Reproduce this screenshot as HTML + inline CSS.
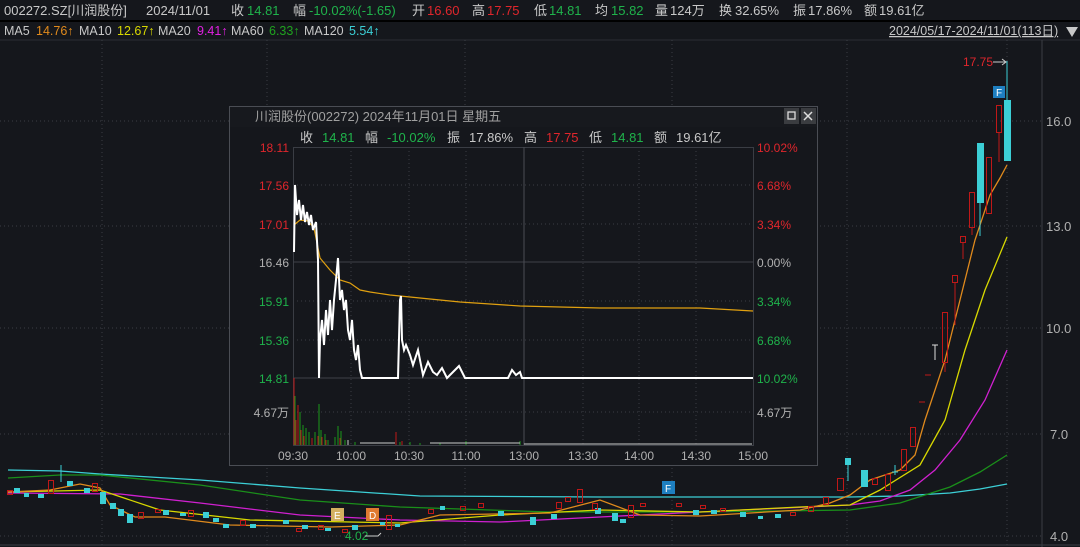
<!DOCTYPE html>
<html><head><meta charset="utf-8"><style>
html,body{margin:0;padding:0;background:#15171c;width:1080px;height:547px;overflow:hidden}
svg{display:block}
text{font-family:"Liberation Sans","Noto Sans CJK SC",sans-serif}
</style></head><body>
<svg width="1080" height="547" viewBox="0 0 1080 547" xmlns="http://www.w3.org/2000/svg">
<rect width="1080" height="547" fill="#15171c"/>
<!-- header -->
<g font-size="13">
<text x="4" y="15" fill="#c8c8c8">002272.SZ[川润股份]</text>
<text x="146" y="15" fill="#c8c8c8">2024/11/01</text>
<text x="231" y="15" fill="#c8c8c8">收</text><text x="247" y="15" fill="#1fb34b">14.81</text>
<text x="293" y="15" fill="#c8c8c8">幅</text><text x="309" y="15" fill="#1fb34b">-10.02%(-1.65)</text>
<text x="412" y="15" fill="#c8c8c8">开</text><text x="427" y="15" fill="#e0262c">16.60</text>
<text x="472" y="15" fill="#c8c8c8">高</text><text x="487" y="15" fill="#e0262c">17.75</text>
<text x="534" y="15" fill="#c8c8c8">低</text><text x="549" y="15" fill="#1fb34b">14.81</text>
<text x="595" y="15" fill="#c8c8c8">均</text><text x="611" y="15" fill="#1fb34b">15.82</text>
<text x="655" y="15" fill="#c8c8c8">量</text><text x="670" y="15" fill="#c8c8c8">124万</text>
<text x="719" y="15" fill="#c8c8c8">换</text><text x="735" y="15" fill="#c8c8c8">32.65%</text>
<text x="793" y="15" fill="#c8c8c8">振</text><text x="808" y="15" fill="#c8c8c8">17.86%</text>
<text x="864" y="15" fill="#c8c8c8">额</text><text x="879" y="15" fill="#c8c8c8">19.61亿</text>
</g>
<line x1="0" y1="21" x2="1080" y2="21" stroke="#000" stroke-width="2"/>
<g font-size="12.5">
<text x="4" y="35" fill="#c8c8c8">MA5</text><text x="36" y="35" fill="#e08a1c">14.76↑</text>
<text x="79" y="35" fill="#c8c8c8">MA10</text><text x="117" y="35" fill="#d8d800">12.67↑</text>
<text x="158" y="35" fill="#c8c8c8">MA20</text><text x="197" y="35" fill="#e020e0">9.41↑</text>
<text x="231" y="35" fill="#c8c8c8">MA60</text><text x="269" y="35" fill="#1fa31f">6.33↑</text>
<text x="304" y="35" fill="#c8c8c8">MA120</text><text x="349" y="35" fill="#3ccfd6">5.54↑</text>
<text x="889" y="35" fill="#c8c8c8" text-decoration="underline">2024/05/17-2024/11/01(113日)</text>
</g>
<path d="M1066 27 L1078 27 L1072 37 Z" fill="#c8c8c8"/>
<line x1="0" y1="40" x2="1080" y2="40" stroke="#2a2d33"/>
<!-- right axis -->
<line x1="1042" y1="40" x2="1042" y2="547" stroke="#3a3d44"/>
<g stroke="#3a3d44" stroke-dasharray="1,3">
<line x1="0" y1="121" x2="1042" y2="121"/><line x1="0" y1="226" x2="1042" y2="226"/>
<line x1="0" y1="328" x2="1042" y2="328"/><line x1="0" y1="434" x2="1042" y2="434"/>
<line x1="0" y1="536" x2="1042" y2="536"/>
<line x1="102" y1="40" x2="102" y2="547"/><line x1="267" y1="40" x2="267" y2="547"/>
<line x1="465" y1="40" x2="465" y2="547"/><line x1="672" y1="40" x2="672" y2="547"/>
<line x1="847" y1="40" x2="847" y2="547"/><line x1="1007" y1="40" x2="1007" y2="547"/>
</g>
<g font-size="13" fill="#b0b0b0">
<text x="1046" y="126">16.0</text><text x="1046" y="231">13.0</text><text x="1046" y="333">10.0</text>
<text x="1050" y="439">7.0</text><text x="1050" y="541">4.0</text>
</g>
<line x1="0" y1="545" x2="1080" y2="545" stroke="#3a3d44"/>
<!-- MA lines -->
<g fill="none" stroke-width="1.3">
<polyline stroke="#3ccfd6" points="8,470 60,471 100,474 200,480 300,488 420,496 600,497 850,497 900,496 950,493 980,489 1007,484"/>
<polyline stroke="#1a8f1a" points="8,478 60,475 100,475 200,485 300,500 400,507 550,512 700,512 850,510 900,503 950,487 980,472 1007,455"/>
<polyline stroke="#d020d0" points="8,493 120,494 200,503 300,515 400,520 500,522 600,517 700,512 850,505 880,501 910,490 935,470 960,440 985,400 1007,350"/>
<polyline stroke="#d8d800" points="8,492 100,490 160,510 250,520 400,523 500,515 600,510 700,512 800,507 850,505 880,490 920,465 945,420 965,350 985,290 1007,237"/>
<polyline stroke="#e08a1c" points="8,492 50,490 80,484 100,488 110,505 135,517 165,517 230,525 330,527 400,525 440,515 550,513 600,500 640,515 700,516 800,510 830,503 850,495 870,480 900,470 915,455 925,420 945,360 960,300 975,240 990,195 1000,178 1007,165"/>
</g>
<!-- candles -->
<g stroke-width="1">
<line x1="1007" y1="61" x2="1007" y2="100" stroke="#3ccfd6"/>
<rect x="1004" y="100" width="7" height="61" fill="#3ccfd6"/>
<rect x="996.5" y="105.5" width="5" height="27" fill="none" stroke="#c01818"/><line x1="999" y1="132" x2="999" y2="162" stroke="#c01818"/>
<rect x="986.5" y="157.5" width="5" height="56" fill="none" stroke="#c01818"/>
<rect x="977" y="143" width="7" height="60" fill="#3ccfd6"/><line x1="980" y1="203" x2="980" y2="236" stroke="#3ccfd6"/>
<rect x="969.5" y="192.5" width="5" height="35" fill="none" stroke="#c01818"/><line x1="972" y1="228" x2="972" y2="235" stroke="#c01818"/>
<rect x="960.5" y="236.5" width="5" height="6" fill="none" stroke="#c01818"/><line x1="963" y1="243" x2="963" y2="259" stroke="#c01818"/>
<rect x="952.5" y="275.5" width="5" height="7" fill="none" stroke="#c01818"/><line x1="955" y1="283" x2="955" y2="325" stroke="#c01818"/>
<rect x="942.5" y="312.5" width="5" height="50" fill="none" stroke="#c01818"/><line x1="945" y1="362" x2="945" y2="372" stroke="#c01818"/>
<path d="M932 345 H938 M935 345 V360" stroke="#ddd"/>
<line x1="925" y1="375" x2="931" y2="375" stroke="#c01818"/><line x1="919" y1="402" x2="925" y2="402" stroke="#c01818"/>
<rect x="910.5" y="427.5" width="5" height="19" fill="none" stroke="#c01818"/>
<rect x="901.5" y="449.5" width="5" height="21" fill="none" stroke="#c01818"/>
<path d="M892 472 H898 M895 465 V475" stroke="#3ccfd6"/>
<rect x="885.5" y="474.5" width="5" height="16" fill="none" stroke="#c01818"/>
<rect x="872.5" y="478.5" width="5" height="6" fill="none" stroke="#c01818"/>
<rect x="861" y="470" width="7" height="17" fill="#3ccfd6"/>
<rect x="845" y="458" width="6" height="7" fill="#3ccfd6"/><line x1="848" y1="465" x2="848" y2="481" stroke="#3ccfd6"/>
<rect x="837.5" y="478.5" width="6" height="12" fill="none" stroke="#c01818"/>
</g>
<g>
<g fill="#3ccfd6">
<rect x="14" y="488" width="6" height="5"/><rect x="24" y="493" width="5" height="4"/><rect x="38" y="494" width="6" height="4"/>
<rect x="67" y="481" width="6" height="5"/><rect x="84" y="488" width="6" height="5"/><rect x="100" y="492" width="6" height="12"/>
<rect x="110" y="503" width="6" height="6"/><rect x="118" y="509" width="6" height="7"/><rect x="127" y="514" width="6" height="9"/>
<rect x="163" y="510" width="6" height="5"/><rect x="180" y="513" width="6" height="3"/><rect x="203" y="512" width="6" height="6"/>
<rect x="213" y="518" width="6" height="4"/><rect x="223" y="524" width="6" height="4"/><rect x="250" y="524" width="6" height="4"/>
<rect x="283" y="520" width="6" height="4"/><rect x="302" y="525" width="6" height="4"/><rect x="325" y="528" width="6" height="3"/>
<rect x="352" y="525" width="6" height="5"/><rect x="380" y="522" width="5" height="3"/><rect x="395" y="524" width="5" height="3"/>
<rect x="440" y="506" width="5" height="4"/><rect x="498" y="511" width="6" height="5"/><rect x="530" y="517" width="6" height="8"/>
<rect x="551" y="514" width="6" height="5"/><rect x="595" y="508" width="6" height="6"/><rect x="612" y="513" width="6" height="8"/>
<rect x="620" y="519" width="6" height="4"/><rect x="693" y="510" width="6" height="5"/><rect x="711" y="510" width="6" height="4"/>
<rect x="740" y="512" width="6" height="5"/><rect x="758" y="516" width="5" height="3"/><rect x="775" y="514" width="6" height="4"/>
</g>
<g fill="none" stroke="#c01818">
<rect x="7.5" y="490.5" width="5" height="4"/><rect x="48.5" y="480.5" width="5" height="13"/><rect x="92.5" y="483.5" width="5" height="8"/>
<rect x="138.5" y="512.5" width="5" height="6"/><rect x="155.5" y="509.5" width="5" height="3"/><rect x="188.5" y="510.5" width="5" height="6"/>
<rect x="240.5" y="520.5" width="5" height="5"/><rect x="296.5" y="528.5" width="5" height="3"/><rect x="318.5" y="525.5" width="5" height="4"/>
<rect x="342.5" y="529.5" width="5" height="3"/><rect x="386.5" y="515.5" width="5" height="14"/><rect x="428.5" y="509.5" width="5" height="4"/>
<rect x="460.5" y="506.5" width="5" height="4"/><rect x="478.5" y="503.5" width="5" height="4"/><rect x="556.5" y="502.5" width="5" height="6"/>
<rect x="565.5" y="497.5" width="5" height="4"/><rect x="577.5" y="489.5" width="5" height="13"/><rect x="592.5" y="503.5" width="5" height="6"/>
<rect x="628.5" y="505.5" width="5" height="12"/><rect x="640.5" y="503.5" width="5" height="3"/><rect x="676.5" y="503.5" width="5" height="3"/>
<rect x="700.5" y="505.5" width="5" height="3"/><rect x="720.5" y="508.5" width="5" height="3"/><rect x="790.5" y="512.5" width="5" height="3"/>
<rect x="808.5" y="506.5" width="5" height="5"/><rect x="823.5" y="497.5" width="5" height="7"/>
</g>
<line x1="61" y1="465" x2="61" y2="482" stroke="#3ccfd6"/>
</g>
<!-- markers -->
<rect x="993" y="86" width="12" height="12" fill="#1e7fc0"/><text x="996" y="96" font-size="10" fill="#fff">F</text>
<rect x="662" y="481" width="13" height="13" fill="#1e7fc0"/><text x="665" y="492" font-size="10" fill="#fff">F</text>
<rect x="331" y="508" width="13" height="13" fill="#d4b060"/><text x="334" y="519" font-size="10" fill="#fff">E</text>
<rect x="366" y="508" width="13" height="13" fill="#e07a30"/><text x="369" y="519" font-size="10" fill="#fff">D</text>
<text x="963" y="66" font-size="12" fill="#e0262c">17.75</text>
<path d="M993 62 H1006 M1002 59 L1006 62 L1002 65" stroke="#ccc" fill="none"/>
<text x="345" y="540" font-size="12" fill="#1fb34b">4.02</text>
<path d="M365 536 H378 L381 533" stroke="#ccc" fill="none"/>
<!-- popup -->
<rect x="229.5" y="106.5" width="588" height="359" fill="#15171c" stroke="#4a4d54"/>
<rect x="230" y="107" width="587" height="20" fill="#17191e"/>
<text x="255" y="121" font-size="13" fill="#a0a0a0">川润股份(002272) 2024年11月01日 星期五</text>
<rect x="784" y="108" width="15" height="16" fill="#3a3c40"/><rect x="788" y="112" width="7" height="7" fill="none" stroke="#ddd" stroke-width="1.3"/>
<rect x="801" y="108" width="15" height="16" fill="#3a3c40"/><path d="M804 112 L812 120 M812 112 L804 120" stroke="#ddd" stroke-width="1.5"/>
<g font-size="13">
<text x="300" y="142" fill="#c8c8c8">收</text><text x="322" y="142" fill="#1fb34b">14.81</text>
<text x="365" y="142" fill="#c8c8c8">幅</text><text x="387" y="142" fill="#1fb34b">-10.02%</text>
<text x="447" y="142" fill="#c8c8c8">振</text><text x="469" y="142" fill="#c8c8c8">17.86%</text>
<text x="524" y="142" fill="#c8c8c8">高</text><text x="546" y="142" fill="#e0262c">17.75</text>
<text x="589" y="142" fill="#c8c8c8">低</text><text x="611" y="142" fill="#1fb34b">14.81</text>
<text x="654" y="142" fill="#c8c8c8">额</text><text x="676" y="142" fill="#c8c8c8">19.61亿</text>
</g>
<rect x="293.5" y="147.5" width="460" height="298" fill="none" stroke="#3a3d44"/>
<g stroke="#3a3d44" stroke-dasharray="1,3">
<line x1="293" y1="185" x2="753" y2="185"/><line x1="293" y1="224" x2="753" y2="224"/>
<line x1="293" y1="301" x2="753" y2="301"/><line x1="293" y1="340" x2="753" y2="340"/>
<line x1="293" y1="412" x2="753" y2="412"/>
<line x1="351" y1="147" x2="351" y2="445"/><line x1="409" y1="147" x2="409" y2="445"/><line x1="466" y1="147" x2="466" y2="445"/>
<line x1="583" y1="147" x2="583" y2="445"/><line x1="639" y1="147" x2="639" y2="445"/><line x1="696" y1="147" x2="696" y2="445"/>
</g>
<line x1="293" y1="262" x2="753" y2="262" stroke="#3e4148"/>
<line x1="293" y1="378" x2="753" y2="378" stroke="#3e4148"/>
<line x1="524" y1="147" x2="524" y2="445" stroke="#4a4d54"/>
<g font-size="12" text-anchor="end">
<text x="289" y="152" fill="#e0262c">18.11</text><text x="289" y="190" fill="#e0262c">17.56</text><text x="289" y="229" fill="#e0262c">17.01</text>
<text x="289" y="267" fill="#b0b0b0">16.46</text><text x="289" y="306" fill="#1fb34b">15.91</text><text x="289" y="345" fill="#1fb34b">15.36</text>
<text x="289" y="383" fill="#1fb34b">14.81</text><text x="289" y="417" fill="#b0b0b0">4.67万</text>
</g>
<g font-size="12">
<text x="757" y="152" fill="#e0262c">10.02%</text><text x="757" y="190" fill="#e0262c">6.68%</text><text x="757" y="229" fill="#e0262c">3.34%</text>
<text x="757" y="267" fill="#b0b0b0">0.00%</text><text x="757" y="306" fill="#1fb34b">3.34%</text><text x="757" y="345" fill="#1fb34b">6.68%</text>
<text x="757" y="383" fill="#1fb34b">10.02%</text><text x="757" y="417" fill="#b0b0b0">4.67万</text>
</g>
<g font-size="12" fill="#b0b0b0" text-anchor="middle">
<text x="293" y="460">09:30</text><text x="351" y="460">10:00</text><text x="409" y="460">10:30</text><text x="466" y="460">11:00</text>
<text x="524" y="460">13:00</text><text x="583" y="460">13:30</text><text x="639" y="460">14:00</text><text x="696" y="460">14:30</text><text x="753" y="460">15:00</text>
</g>
<polyline fill="none" stroke="#e0a010" stroke-width="1.2" points="294,225 300,220 308,221 314,228 320,258 330,270 340,280 350,283 360,290 370,292 390,295 420,298 460,302 520,306 600,308 700,308 753,311"/>
<polyline fill="none" stroke="#fff" stroke-width="2" points="294,252 295,185 297,215 299,200 301,220 303,205 305,222 307,212 309,225 311,215 313,230 316,222 318,260 319,378 320,340 322,320 324,345 326,310 328,335 330,300 332,330 334,300 336,280 338,258 340,300 342,290 344,310 346,300 348,330 350,340 352,320 354,350 356,360 358,345 360,370 362,378 398,378 400,300 401,296 402,340 404,350 406,345 410,355 413,365 418,350 423,375 428,362 433,372 437,375 442,368 447,378 453,372 459,366 465,378 508,378 512,370 516,375 520,372 522,378 753,378"/>
<g stroke-width="1">
<path d="M294 378V445 M296 420V445 M298 405V445 M301 430V445 M304 436V445 M312 438V445 M318 436V445 M322 437V445 M326 440V445 M340 438V445 M396 432V445 M402 441V445" stroke="#c01818"/>
<path d="M295 396V445 M300 412V445 M303 425V445 M306 428V445 M309 432V445 M315 432V445 M319 404V445 M321 430V445 M325 434V445 M328 440V445 M335 437V445 M338 426V445 M341 431V445 M345 440V445 M355 442V445 M400 442V445 M410 442V445 M420 443V445 M440 443V445 M466 441V445 M520 441V445" stroke="#1a9a1a"/>
<path d="M348 440V445 M360 443H395 M430 443H520 M524 444H752" stroke="#ccc"/>
</g>
</svg>
</body></html>
